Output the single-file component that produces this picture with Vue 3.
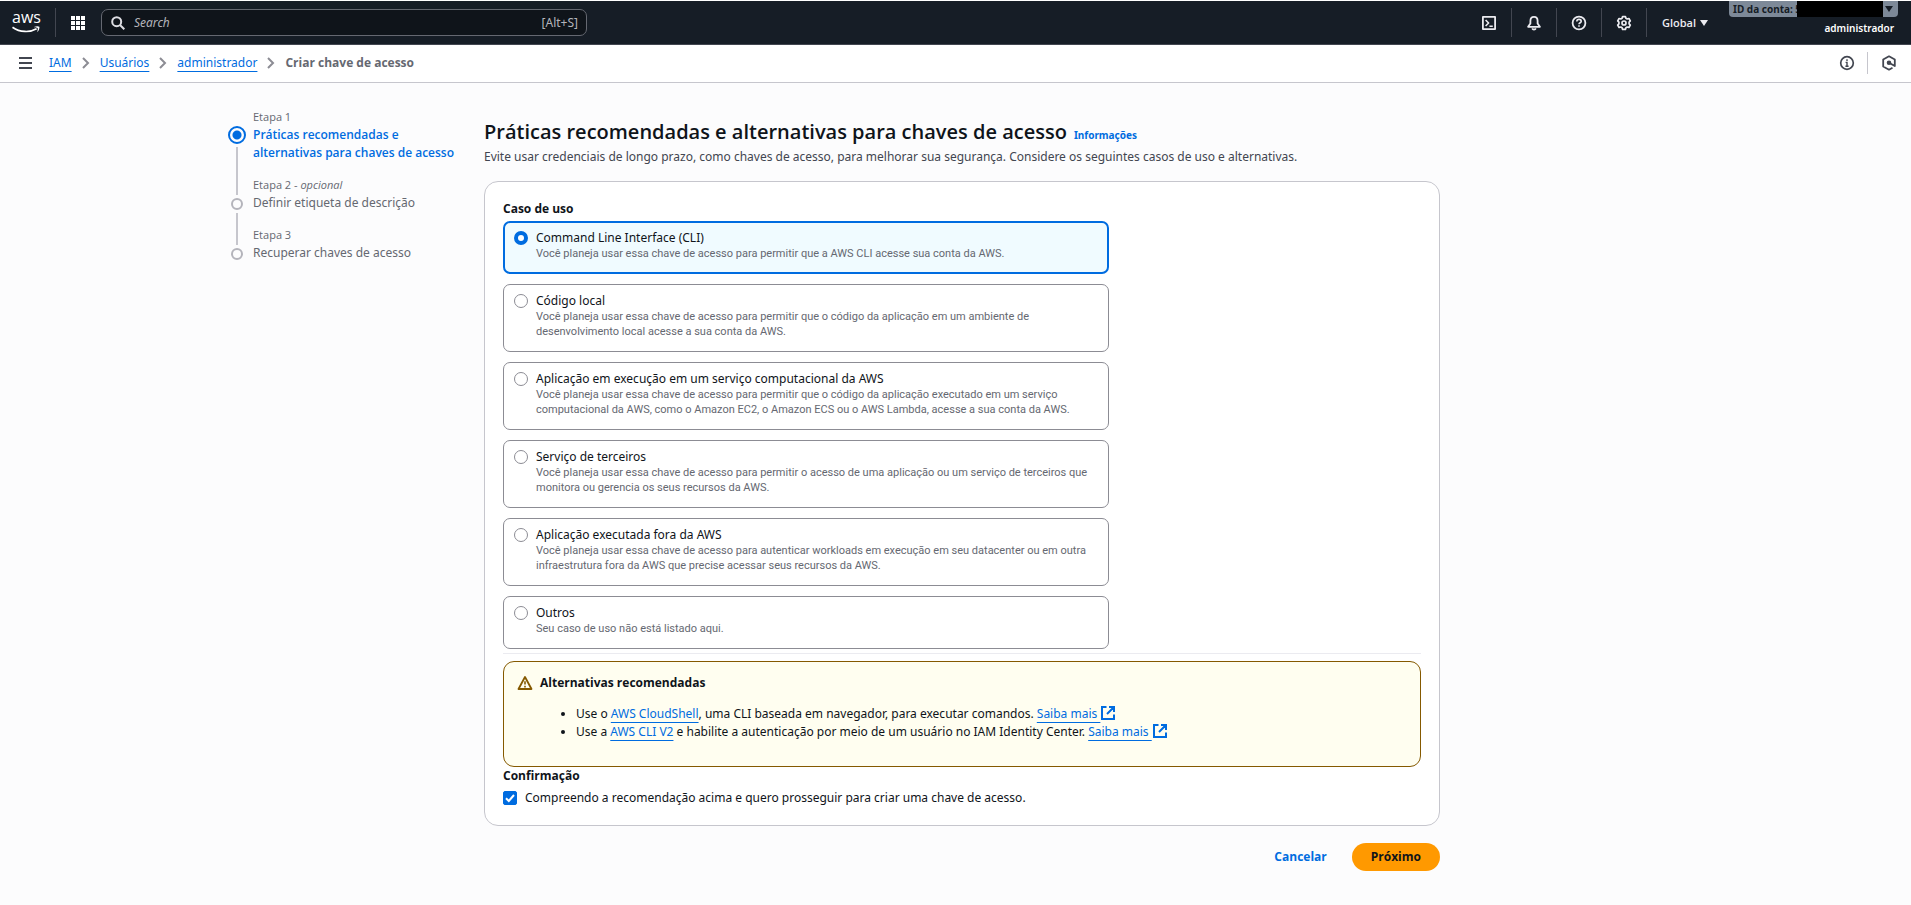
<script setup>
import { ref } from 'vue'

const selected = ref('cli')
const confirmed = ref(true)
const search = ref('')

const crumbs = ['IAM', 'Usuários', 'administrador']

const steps = [
  { label: 'Etapa 1', title: 'Práticas recomendadas e alternativas para chaves de acesso', active: true },
  { label: 'Etapa 2', optional: true, title: 'Definir etiqueta de descrição' },
  { label: 'Etapa 3', title: 'Recuperar chaves de acesso' },
]

const options = [
  { id: 'cli', title: 'Command Line Interface (CLI)', text: 'Você planeja usar essa chave de acesso para permitir que a AWS CLI acesse sua conta da AWS.' },
  { id: 'local', title: 'Código local', text: 'Você planeja usar essa chave de acesso para permitir que o código da aplicação em um ambiente de desenvolvimento local acesse a sua conta da AWS.' },
  { id: 'compute', title: 'Aplicação em execução em um serviço computacional da AWS', text: 'Você planeja usar essa chave de acesso para permitir que o código da aplicação executado em um serviço computacional da AWS, como o Amazon EC2, o Amazon ECS ou o AWS Lambda, acesse a sua conta da AWS.' },
  { id: 'third', title: 'Serviço de terceiros', text: 'Você planeja usar essa chave de acesso para permitir o acesso de uma aplicação ou um serviço de terceiros que monitora ou gerencia os seus recursos da AWS.' },
  { id: 'outside', title: 'Aplicação executada fora da AWS', text: 'Você planeja usar essa chave de acesso para autenticar workloads em execução em seu datacenter ou em outra infraestrutura fora da AWS que precise acessar seus recursos da AWS.' },
  { id: 'other', title: 'Outros', text: 'Seu caso de uso não está listado aqui.' },
]
</script>

<template>
  <div class="page">
    <header class="topbar">
      <a class="logo" href="#" aria-label="AWS">
        <span class="logo-word">aws</span>
        <svg class="logo-smile" viewBox="0 0 28 8" aria-hidden="true">
          <path d="M0.5 1.2C8 6.6 18 6.6 24.6 2.8" fill="none" stroke="#fff" stroke-width="1.7" />
          <path d="M22 0.9C24 0 26.6 0 27.3 0.8C28 1.8 26.6 5 25.4 6.2C25.4 4.6 26.2 2.6 25.6 2C25 1.4 23.4 1.6 22 0.9Z" fill="#fff" />
        </svg>
      </a>
      <button class="apps" type="button" aria-label="Serviços">
        <svg width="14" height="14" viewBox="0 0 14 14" fill="#fff">
          <path d="M0 0h4v4H0zM5 0h4v4H5zM10 0h4v4h-4zM0 5h4v4H0zM5 5h4v4H5zM10 5h4v4h-4zM0 10h4v4H0zM5 10h4v4H5zM10 10h4v4h-4z" />
        </svg>
      </button>
      <label class="search">
        <svg width="14" height="14" viewBox="0 0 14 14" fill="none" stroke="#dedee3" stroke-width="2">
          <circle cx="5.7" cy="5.7" r="4.5" />
          <path d="M9 9l4.3 4.3" />
        </svg>
        <input v-model="search" type="text" placeholder="Search" aria-label="Search" />
        <span>[Alt+S]</span>
      </label>
      <nav class="tools">
        <button type="button" aria-label="CloudShell">
          <svg width="16" height="16" viewBox="0 0 16 16" fill="none" stroke="#ebebf0" stroke-width="1.8" stroke-linejoin="round">
            <rect x="1.9" y="1.9" width="12.2" height="12.2" />
            <path d="M4.6 5l3 3-3 3M8.4 11.2h3.4" stroke-width="1.6" />
          </svg>
        </button>
        <button type="button" aria-label="Notificações">
          <svg width="16" height="16" viewBox="0 0 16 16" fill="none" stroke="#ebebf0" stroke-width="1.8" stroke-linejoin="round">
            <path d="M8 1.9C5.6 1.9 4.4 3.7 4.4 5.9v2.6L2.1 11.8h11.8L11.6 8.5V5.9C11.6 3.7 10.4 1.9 8 1.9z" />
            <path d="M6.2 13.4c.6 1.6 3 1.6 3.6 0" />
          </svg>
        </button>
        <button type="button" aria-label="Ajuda">
          <svg width="16" height="16" viewBox="0 0 16 16" fill="none" stroke="#ebebf0" stroke-width="1.8">
            <circle cx="8" cy="8" r="6.4" />
            <path d="M5.8 6.6C5.8 5 6.8 4.4 8 4.4s2.2.8 2.2 2C10.2 7.8 8 7.7 8 9.3M8 10.2v1.6" stroke-width="1.6" />
          </svg>
        </button>
        <button type="button" aria-label="Configurações">
          <svg width="16" height="16" viewBox="0 0 16 16" fill="none" stroke="#ebebf0" stroke-width="1.7" stroke-linejoin="round">
            <path d="M6.6 1.6h2.8l.5 1.7 1.3.7 1.7-.5 1.4 2.4-1.2 1.3v1.6l1.2 1.3-1.4 2.4-1.7-.5-1.3.7-.5 1.7H6.6l-.5-1.7-1.3-.7-1.7.5-1.4-2.4 1.2-1.3V7.2L1.7 5.9l1.4-2.4 1.7.5 1.3-.7z" />
            <circle cx="8" cy="8" r="2" />
          </svg>
        </button>
      </nav>
      <button class="region" type="button">Global <i class="caret"></i></button>
      <div class="account">
        <button class="account-tab" type="button">
          <span class="account-id">ID da conta: 5</span><span class="redacted"></span><i class="caret dark"></i>
        </button>
        <span class="user">administrador</span>
      </div>
    </header>

    <div class="crumbbar">
      <button class="menu" type="button" aria-label="Abrir navegação">
        <svg width="13" height="12" viewBox="0 0 13 12" stroke="#424650" stroke-width="2"><path d="M0 1h13M0 6h13M0 11h13" /></svg>
      </button>
      <nav class="crumbs" aria-label="Trilha">
        <template v-for="c in crumbs" :key="c">
          <a href="#">{{ c }}</a>
          <svg width="8" height="12" viewBox="0 0 8 12" fill="none" stroke="#8c8c94" stroke-width="2"><path d="M1 1l5 5-5 5" /></svg>
        </template>
        <strong>Criar chave de acesso</strong>
      </nav>
      <button class="info-btn" type="button" aria-label="Informações">
        <svg width="16" height="16" viewBox="0 0 16 16" fill="none" stroke="#424650" stroke-width="1.7">
          <circle cx="8" cy="8" r="6.3" />
          <path d="M8 4.2v1.7M6.6 7.4H8v3.8M6.4 11.2h3.2" stroke-width="1.4" />
        </svg>
      </button>
      <button class="hex-btn" type="button" aria-label="Assistente">
        <svg width="16" height="16" viewBox="0 0 16 16" fill="none" stroke="#424650" stroke-width="1.8" stroke-linejoin="round">
          <path d="M11.5 12.8L8 14.7 2.2 11.5v-7L8 1.3l5.8 3.2v6.5L8 7.8" />
          <circle cx="8" cy="7.8" r="1.4" fill="#424650" />
        </svg>
      </button>
    </div>

    <div class="layout">
      <ol class="steps">
        <li v-for="s in steps" :key="s.label" :class="{ active: s.active }">
          <div class="rail"><i class="dot"></i></div>
          <div class="step-text">
            <small>{{ s.label }}<template v-if="s.optional"> - <em>opcional</em></template></small>
            <a v-if="s.active" href="#">{{ s.title }}</a>
            <span v-else>{{ s.title }}</span>
          </div>
        </li>
      </ol>

      <main>
        <div class="heading">
          <h1>Práticas recomendadas e alternativas para chaves de acesso</h1>
          <a href="#">Informações</a>
        </div>
        <p class="lead">Evite usar credenciais de longo prazo, como chaves de acesso, para melhorar sua segurança. Considere os seguintes casos de uso e alternativas.</p>

        <form id="key-form" class="card" @submit.prevent>
          <fieldset class="choices">
            <legend>Caso de uso</legend>
            <label v-for="o in options" :key="o.id" class="tile" :class="{ on: selected === o.id }">
              <input v-model="selected" type="radio" name="usecase" :value="o.id" />
              <span class="tile-text">
                <span>{{ o.title }}</span>
                <small>{{ o.text }}</small>
              </span>
            </label>
          </fieldset>

          <hr />

          <section class="alert">
            <svg width="16" height="16" viewBox="0 0 16 16" fill="none" stroke="#855900" stroke-width="1.8" stroke-linejoin="round">
              <path d="M8 2L14.5 14H1.5z" />
              <path d="M8 6.2v3.4M8 10.8v1.6" stroke-width="1.6" />
            </svg>
            <div>
              <h2>Alternativas recomendadas</h2>
              <ul>
                <li>
                  Use o <a href="#">AWS CloudShell</a>, uma CLI baseada em navegador, para executar comandos.
                  <a href="#">Saiba mais&nbsp;</a><svg class="ext" width="14" height="14" viewBox="0 0 14 14" fill="none" stroke="#006ce0" stroke-width="2"><path d="M5.5 1H1v12h12V8.5M8 1h5v5M13 1L6 8" /></svg>
                </li>
                <li>
                  Use a <a href="#">AWS CLI V2</a> e habilite a autenticação por meio de um usuário no IAM Identity Center.
                  <a href="#">Saiba mais&nbsp;</a><svg class="ext" width="14" height="14" viewBox="0 0 14 14" fill="none" stroke="#006ce0" stroke-width="2"><path d="M5.5 1H1v12h12V8.5M8 1h5v5M13 1L6 8" /></svg>
                </li>
              </ul>
            </div>
          </section>

          <h3>Confirmação</h3>
          <label class="confirm">
            <input v-model="confirmed" type="checkbox" />
            <svg class="tick" width="14" height="14" viewBox="0 0 14 14" fill="none" stroke="#fff" stroke-width="2" aria-hidden="true"><path d="M3 7.2l2.8 2.8L11 4" /></svg>
            <span>Compreendo a recomendação acima e quero prosseguir para criar uma chave de acesso.</span>
          </label>
        </form>

        <div class="actions">
          <button class="cancel" type="button">Cancelar</button>
          <button class="next" type="submit" form="key-form">Próximo</button>
        </div>
      </main>
    </div>
  </div>
</template>

<style>
body {
  background: #fcfcfd;
}
</style>

<style scoped>
.page,
.page * {
  box-sizing: border-box;
}
.page {
  font-family: "Noto Sans", "Open Sans", sans-serif;
  font-size: 12px;
  line-height: 18px;
  color: #0f141a;
  border-top: 1px solid #fff;
}
h1,
h2,
h3,
legend,
strong,
small,
.region,
.step-text a,
.actions {
  font-family: "Open Sans", "Noto Sans", sans-serif;
}
button,
input {
  font: inherit;
  color: inherit;
  margin: 0;
}
button {
  border: 0;
  padding: 0;
  background: none;
  display: flex;
  align-items: center;
  justify-content: center;
}
a {
  color: #006ce0;
}
svg {
  display: block;
  flex: none;
}

.topbar {
  display: flex;
  align-items: center;
  height: 44px;
  background: #161d26;
  border-bottom: 1px solid #424650;
  color: #ebebf0;
}
.logo {
  width: 56px;
  height: 29px;
  padding: 2px 0 0 12px;
  border-right: 1px solid #424650;
  color: #fff;
  text-decoration: none;
}
.logo-word {
  display: block;
  height: 14px;
  font: 500 16px/14px "Open Sans", sans-serif;
}
.logo-smile {
  width: 28px;
  height: 8px;
  margin-top: 2px;
}
.apps {
  width: 45px;
  height: 29px;
  padding-right: 1px;
}
.search {
  display: flex;
  align-items: center;
  gap: 9px;
  width: 486px;
  height: 27px;
  padding: 0 8px 0 9px;
  border: 1px solid #656871;
  border-radius: 7px;
  background: #0f141a;
  color: #b4b4bb;
}
.search input {
  flex: 1;
  min-width: 0;
  padding: 0;
  border: 0;
  outline: 0;
  background: none;
}
.search input::placeholder {
  color: #b4b4bb;
  font-style: italic;
  opacity: 1;
}
.tools {
  display: flex;
  margin-left: auto;
}
.tools button {
  width: 45px;
  height: 29px;
  border-right: 1px solid #424650;
}
.region {
  gap: 4px;
  padding-left: 15px;
  font-size: 11px;
  font-weight: 600;
}
.caret {
  border: 4px solid transparent;
  border-top: 6px solid #ebebf0;
  border-bottom: 0;
}
.caret.dark {
  border-top-color: #161d26;
}
.account {
  display: flex;
  flex-direction: column;
  align-self: flex-start;
  width: 169px;
  margin: 0 13px 0 21px;
  font-size: 10px;
  font-weight: 600;
}
.account-tab {
  height: 16px;
  padding: 0 5px 0 4px;
  border-radius: 0 0 4px 4px;
  background: #7d8998;
  color: #161d26;
  font-weight: 700;
}
.account-id {
  flex: none;
  white-space: nowrap;
}
.redacted {
  flex: 1;
  align-self: stretch;
  margin: 0 2px 0 -4px;
  background: #000;
}
.user {
  align-self: flex-end;
  padding: 2px 4px 0 0;
  color: #fff;
}

.crumbbar {
  display: flex;
  align-items: center;
  height: 38px;
  padding: 0 14px 2px 19px;
  background: #fff;
  border-bottom: 1px solid #c6c6cd;
}
.crumbs {
  display: flex;
  align-items: center;
  gap: 10px;
  flex: 1;
  margin-left: 17px;
}
.crumbs a,
.alert a {
  text-underline-offset: 4px;
}
.crumbs strong {
  color: #656871;
}
.info-btn {
  width: 29px;
  height: 22px;
  padding-right: 12px;
  border-right: 1px solid #c6c6cd;
}
.hex-btn {
  margin-left: 13px;
}

.layout {
  display: grid;
  grid-template-columns: 236px minmax(0, 956px) minmax(0, 223px);
  gap: 20px;
  justify-content: center;
  padding-top: 25px;
}
.steps {
  list-style: none;
  margin: 0;
  padding: 0;
}
.steps li {
  display: flex;
}
.rail {
  display: flex;
  flex-direction: column;
  align-items: center;
  width: 18px;
  margin-right: 7px;
  padding-top: 22px;
}
.dot {
  flex: none;
  width: 12px;
  height: 12px;
  border: 2px solid #b4b4bb;
  border-radius: 50%;
}
.rail::after {
  content: "";
  flex: 1;
  width: 2px;
  margin: 3px 0 -19px;
  background: #c6c6cd;
}
.steps li:last-child .rail::after {
  display: none;
}
.active .rail {
  padding-top: 18px;
}
.active .dot {
  width: 18px;
  height: 18px;
  border-color: #006ce0;
  background: radial-gradient(circle, #006ce0 4px, #fcfcfd 5px);
}
.active .rail::after {
  margin-bottom: -19px;
}
.step-text {
  flex: 1;
  padding-bottom: 14px;
  color: #656871;
}
.step-text small {
  display: block;
  font-size: 11px;
  line-height: 18px;
}
.step-text a,
.step-text span {
  display: block;
}
.step-text a {
  font-weight: 600;
  text-decoration: none;
}

main {
  padding-top: 10px;
}
.heading {
  display: flex;
  align-items: baseline;
  gap: 7px;
}
h1 {
  margin: 0;
  font-size: 20px;
  line-height: 28px;
  font-weight: 600;
}
.heading a {
  font-size: 10px;
  font-weight: 700;
  text-decoration: none;
}
.lead {
  margin: 2px 0 15px;
  color: #424650;
}
.card {
  padding: 18px;
  background: #fff;
  border: 1px solid #c6c6cd;
  border-radius: 14px;
}
.choices {
  display: flex;
  flex-direction: column;
  gap: 10px;
  width: 66%;
  margin: 0;
  padding: 0;
  border: 0;
}
legend,
h3 {
  padding: 0;
  margin: 0;
  font-size: 12px;
  line-height: 18px;
  font-weight: 700;
}
legend {
  margin-bottom: 3px;
}
.tile {
  display: flex;
  gap: 8px;
  padding: 8px 10px 12px;
  border: 1px solid #8c8c94;
  border-radius: 7px;
}
.tile.on {
  padding: 7px 9px 11px;
  border: 2px solid #006ce0;
  background: #f0fbff;
}
.tile input {
  appearance: none;
  flex: none;
  width: 14px;
  height: 14px;
  margin-top: 1px;
  border: 1px solid #8c8c94;
  border-radius: 50%;
  background: #fff;
}
.tile input:checked {
  border: 4px solid #006ce0;
}
.tile-text span,
.tile-text small {
  display: block;
}
.tile-text span {
  line-height: 16px;
}
.tile-text small {
  font-family: Roboto, "Open Sans", sans-serif;
  font-size: 11px;
  line-height: 15px;
  color: #656871;
}
hr {
  margin: 4px 0 7px;
  border: 0;
  border-top: 1px solid #ebebf0;
}
.alert {
  display: flex;
  gap: 7px;
  padding: 12px 14px 25px 13px;
  background: #fffef0;
  border: 1px solid #855900;
  border-radius: 11px;
}
.alert > svg {
  margin-top: 1px;
}
h2 {
  margin: 0 0 13px;
  font-size: 12px;
  line-height: 18px;
}
.alert ul {
  margin: 0;
  padding-left: 36px;
}
.ext {
  display: inline-block;
  margin-left: 1px;
  vertical-align: -2px;
}
.confirm {
  display: flex;
  align-items: center;
  gap: 8px;
  position: relative;
  margin-top: 4px;
}
.confirm input {
  appearance: none;
  width: 14px;
  height: 14px;
  border: 1px solid #8c8c94;
  border-radius: 2px;
}
.confirm input:checked {
  border-color: #006ce0;
  background: #006ce0;
}
.tick {
  position: absolute;
  left: 0;
}
.actions {
  display: flex;
  justify-content: flex-end;
  gap: 6px;
  padding: 17px 0 33px;
}
.actions button {
  height: 28px;
  padding: 0 19px;
  border-radius: 14px;
  font-weight: 700;
}
.cancel {
  color: #006ce0;
}
.actions .next {
  background: #ff9900;
}
</style>
